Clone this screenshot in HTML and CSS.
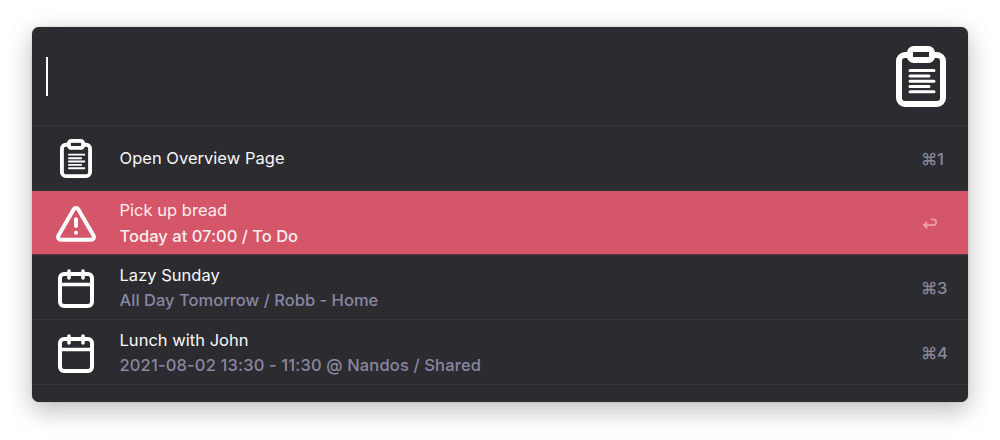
FILE: index.html
```
<!DOCTYPE html>
<html lang="en">
<head>
<meta charset="utf-8">
<title>Launcher</title>
<link rel="stylesheet" href="styles.css">
</head>
<body>
<svg width="0" height="0" class="defs" aria-hidden="true">
  <symbol id="clipboard" viewBox="0 0 50 61">
    <rect x="3" y="9" width="44" height="49" rx="6" fill="none" stroke="#fff" stroke-width="6"/>
    <rect x="14" y="3" width="22" height="11" rx="3.6" fill="#fff" stroke="#fff" stroke-width="6"/>
    <rect x="17" y="6" width="16" height="5" fill="#2c2b30"/>
    <path d="M14 24.5h24M14 30h19M14 35.2h24M14 40.5h19M14 45.7h24" stroke="#fff" stroke-width="3" stroke-linecap="round"/>
  </symbol>
  <symbol id="calendar" viewBox="0 0 36 39">
    <rect x="2" y="5" width="32" height="32" rx="4" fill="none" stroke="#fff" stroke-width="4"/>
    <path d="M11 2v7M25 2v7M2 15.5h32" fill="none" stroke="#fff" stroke-width="3.6" stroke-linecap="round"/>
  </symbol>
</svg>
<main class="panel">
  <header class="search">
    <span class="caret"></span>
    <svg class="logo" width="50" height="61"><use href="#clipboard"/></svg>
  </header>
  <ul class="results">
    <li class="row row-first">
      <span class="icon"><svg width="32" height="39"><use href="#clipboard"/></svg></span>
      <div class="text"><div class="title">Open Overview Page</div></div>
      <span class="key">⌘1</span>
    </li>
    <li class="row selected">
      <span class="icon"><svg width="40" height="36" viewBox="0 0 40 36" fill="none" stroke="#fff" stroke-width="4" stroke-linecap="round" stroke-linejoin="round"><path d="M17.6 3.4 2.5 29.6a2.8 2.8 0 0 0 2.4 4.2h30.2a2.8 2.8 0 0 0 2.4-4.2L22.4 3.4a2.8 2.8 0 0 0-4.8 0Z"/><path d="M20 13.2v6.8M20 26.7v.1"/></svg></span>
      <div class="text"><div class="title">Pick up bread</div><div class="sub">Today at 07:00 / To Do</div></div>
      <span class="key"><svg width="16" height="13" viewBox="0 0 16 13"><path d="M4 8.1h7.2a2.9 2.9 0 0 0 0-5.8H9.5" fill="none" stroke="#eb9fa9" stroke-width="1.7" stroke-linecap="round"/><path d="M.9 8.1 5 4.4v7.4Z" fill="#eb9fa9" stroke="#eb9fa9" stroke-width=".6" stroke-linejoin="round"/></svg></span>
    </li>
    <li class="row">
      <span class="icon"><svg width="36" height="39"><use href="#calendar"/></svg></span>
      <div class="text"><div class="title">Lazy Sunday</div><div class="sub">All Day Tomorrow / Robb - Home</div></div>
      <span class="key">⌘3</span>
    </li>
    <li class="row">
      <span class="icon"><svg width="36" height="39"><use href="#calendar"/></svg></span>
      <div class="text"><div class="title">Lunch with John</div><div class="sub numeric">2021-08-02 13:30 - 11:30 @ Nandos / Shared</div></div>
      <span class="key">⌘4</span>
    </li>
  </ul>
</main>
</body>
</html>
```
FILE: styles.css
```
* { box-sizing: border-box; }
body {
  margin: 0;
  height: 440px;
  padding: 27px 32px 0;
  background: #fff;
  font-family: Inter, "Liberation Sans", sans-serif;
  overflow: hidden;
}
.defs { position: absolute; }
.panel {
  height: 375px;
  border-radius: 7px;
  background: #2c2b30;
  overflow: hidden;
  box-shadow: 0 0 1px rgba(0, 0, 0, .55), 0 8px 26px rgba(0, 0, 0, .27);
}
.search {
  height: 99px;
  display: flex;
  align-items: center;
  justify-content: space-between;
  padding: 0 22px 0 14px;
  border-bottom: 1px solid #37363c;
}
.caret { width: 2px; height: 39px; background: #fff; }
.results { list-style: none; margin: 0; padding: 0; }
.row {
  height: 65px;
  display: flex;
  align-items: center;
  border-bottom: 1px solid #37363c;
  color: #f8f8fa;
}
.row-first { border-bottom-color: #272c35; }
.row.selected { height: 64px; background: #d55668; border-bottom-color: #62333e; }
.icon { width: 87.5px; display: flex; justify-content: center; padding-top: 3px; }
.row-first .icon { padding-top: 1px; }
.selected .icon { padding-top: 2px; }
.text {
  flex: 1;
  padding-top: 2px;
  font-size: 16.5px;
  white-space: nowrap;
}
.title, .sub { line-height: 25.5px; }
.title { letter-spacing: .02px; }
.sub { color: #8887a0; font-weight: 450; letter-spacing: .02px; }
.sub.numeric { letter-spacing: .15px; }
.selected .title, .selected .sub { color: #fdeef0; }
.key {
  width: 47px;
  padding-top: 1px;
  font-size: 16.5px;
  font-weight: 450;
  letter-spacing: -.3px;
  color: #8887a0;
  display: flex;
}
.selected .key { width: 46px; padding-top: 2px; }
```
